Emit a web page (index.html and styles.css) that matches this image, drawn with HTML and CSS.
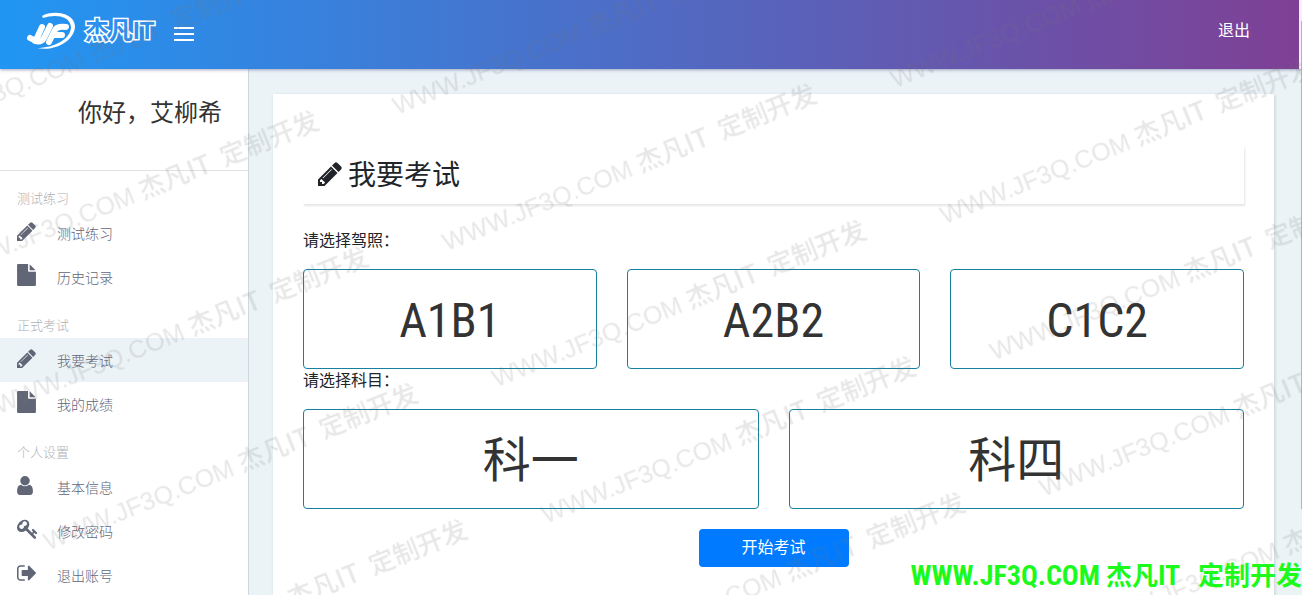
FILE: index.html
```html
<!DOCTYPE html>
<html lang="zh-CN">
<head>
<meta charset="utf-8">
<title>我要考试</title>
<link rel="stylesheet" href="styles.css">
</head>
<body>
<svg class="sprite" aria-hidden="true">
  <symbol id="pencil" viewBox="0 0 1536 1536"><path d="M363 1408l91-91-235-235-91 91v107h128v128h107zM886 480q0-22-22-22-10 0-17 7l-542 542q-7 7-7 17 0 22 22 22 10 0 17-7l542-542q7-7 7-17zM832 288l416 416-832 832H0v-416zM1515 384q0 53-37 90l-166 166-416-416 166-165q36-38 90-38 53 0 91 38l235 234q37 39 37 91z"/></symbol>
  <symbol id="file" viewBox="0 0 1536 1792"><path d="M1024 512V40q22 14 36 28l408 408q14 14 28 36h-472zM896 544q0 40 28 68t68 28h544v1056q0 40-28 68t-68 28H96q-40 0-68-28t-28-68V96q0-40 28-68T96 0h800v544z"/></symbol>
  <symbol id="user" viewBox="0 0 1280 1536"><path d="M1280 1271q0 109-62.500 187t-150.500 78H213q-88 0-150.500-78T0 1271q0-85 8.500-160.500t31.500-152 58.500-131 94-89T327 704q131 128 313 128t313-128q76 0 134.500 34.500t94 89 58.500 131 31.500 152 8.500 160.500zM1024 384q0 159-112.500 271.500T640 768 368.500 655.500 256 384t112.500-271.500T640 0t271.500 112.500T1024 384z"/></symbol>
  <symbol id="key" viewBox="0 128 1664 1664"><path d="M832 512q0-80-56-136t-136-56-136 56-56 136q0 42 19 83-41-19-83-19-80 0-136 56t-56 136 56 136 136 56 136-56 56-136q0-42-19-83 41 19 83 19 80 0 136-56t56-136zM1683 1280q0 17-49 66t-66 49q-9 0-28.500-16t-36.500-33-38.500-40-24.500-26l-96 96 220 220q28 28 28 68 0 42-39 81t-81 39q-40 0-68-28L733 1085q-176 131-365 131-163 0-265.500-102.500T0 848q0-160 95-313t248-248 313-95q163 0 265.500 102.500T1024 560q0 189-131 365l355 355 96-96q-3-3-26-24.500t-40-38.500-33-36.500-16-28.500q0-17 49-66t66-49q13 0 23 10 6 6 46 44.500t82 79.500 86.500 86 73 78 28.500 41z"/></symbol>
  <symbol id="exit" viewBox="0 0 1568 1280"><path d="M640 1184q0 4 1 20t.5 26.500-3 23.500-10 19.500T608 1280H288q-119 0-203.500-84.500T0 992V288Q0 169 84.500 84.500T288 0h320q13 0 22.500 9.500T640 32q0 4 1 20t.5 26.500-3 23.500-10 19.500T608 128H288q-66 0-113 47t-47 113v704q0 66 47 113t113 47h312q7 0 11.500 1t11.500 3 8 7 7 9 2 12zM1568 640q0 26-19 45l-544 544q-19 19-45 19t-45-19-19-45V896H448q-26 0-45-19t-19-45V448q0-26 19-45t45-19h448V96q0-26 19-45t45-19 45 19l544 544q19 19 19 45z"/></symbol>
</svg>

<header class="topbar">
  <a class="brand" href="#" aria-label="杰凡IT">
    <svg class="brand-mark" viewBox="0 0 50 42" aria-hidden="true">
      <path d="M15 6C25 0 47 2 48 16C48 31 27 42 10 38C27 38 44 29 44 17C43 5 27 4 16 8Z"/>
      <path class="letter" d="M15 17L10 28Q8 31 3 28"/>
      <path class="letter" d="M23 16L17 28Q14 33 8 31"/>
      <path class="letter" d="M22 32L28 20Q30 16 39 17M27 25H35"/>
    </svg>
    <span class="brand-name">杰凡IT</span>
  </a>
  <button class="menu" type="button" aria-label="菜单"><span></span><span></span><span></span></button>
  <a class="logout" href="#">退出</a>
</header>

<div class="layout">
  <aside class="sidebar">
    <div class="greeting">你好，艾柳希</div>
    <nav>
      <h2>测试练习</h2>
      <a href="#"><svg class="i-pencil"><use href="#pencil"/></svg>测试练习</a>
      <a href="#"><svg class="i-file"><use href="#file"/></svg>历史记录</a>
      <h2>正式考试</h2>
      <a class="active" href="#"><svg class="i-pencil"><use href="#pencil"/></svg>我要考试</a>
      <a href="#"><svg class="i-file"><use href="#file"/></svg>我的成绩</a>
      <h2>个人设置</h2>
      <a href="#"><svg class="i-user"><use href="#user"/></svg>基本信息</a>
      <a href="#"><svg class="i-key"><use href="#key"/></svg>修改密码</a>
      <a href="#"><svg class="i-exit"><use href="#exit"/></svg>退出账号</a>
    </nav>
  </aside>
  <main class="content">
    <section class="panel">
      <h1><svg><use href="#pencil"/></svg>我要考试</h1>
      <p id="license">请选择驾照：</p>
      <div class="choices" role="group" aria-labelledby="license">
        <button type="button">A1B1</button>
        <button type="button">A2B2</button>
        <button type="button">C1C2</button>
      </div>
      <p id="subject">请选择科目：</p>
      <div class="choices" role="group" aria-labelledby="subject">
        <button type="button">科一</button>
        <button type="button">科四</button>
      </div>
      <button class="start" type="button">开始考试</button>
    </section>
  </main>
</div>

<div class="scroll-thumb"></div>
<svg class="watermark" aria-hidden="true">
  <defs>
    <pattern id="wm" width="477" height="145" patternUnits="userSpaceOnUse" patternTransform="translate(397 115) rotate(-20) translate(0 -110)">
      <text x="0" y="110" transform="rotate(-2 0 110)" xml:space="preserve"><tspan class="latin">WWW.JF3Q.COM </tspan>杰凡IT  定制开发</text>
    </pattern>
  </defs>
  <rect width="100%" height="100%" fill="url(#wm)"/>
</svg>
<div class="credit"><span>WWW.JF3Q.COM</span> 杰凡<span>IT</span>&nbsp;&nbsp; 定制开发</div>
</body>
</html>
```
FILE: styles.css
```css
* { box-sizing: border-box; }
body {
  margin: 0;
  min-height: 100vh;
  display: flex;
  flex-direction: column;
  overflow: hidden;
  background: #ebf3f7;
  color: #212529;
  font: 16px/24px "Liberation Sans", "Noto Sans CJK SC", sans-serif;
}
a { color: inherit; text-decoration: none; }
button { font: inherit; cursor: pointer; }
svg { fill: currentColor; }
.sprite { display: none; }

.topbar {
  position: relative;
  z-index: 1;
  display: flex;
  align-items: center;
  height: 69px;
  padding: 0 49px 8px 27px;
  border-right: 3px solid #f6effb;
  background: linear-gradient(to right, #2196f3, #7e4095);
  box-shadow: 0 1px 3px rgba(60, 60, 120, .45);
  color: #fff;
}
.brand { display: flex; align-items: center; gap: 8px; }
.brand-mark { width: 50px; height: 42px; }
.letter { fill: none; stroke: #fff; stroke-width: 6; stroke-linecap: round; }
.brand-name {
  font-size: 24px;
  font-weight: 700;
  color: #2d90ee;
  -webkit-text-stroke: 3px #fff;
  paint-order: stroke;
}
.menu {
  display: grid;
  gap: 4px;
  margin: 6px 0 0 20px;
  padding: 0;
  border: 0;
  background: none;
}
.menu span { width: 20px; height: 2px; background: #fff; }
.logout { margin-left: auto; }

.layout { flex: 1; display: flex; }
.sidebar {
  width: 249px;
  flex: none;
  background: #fff;
  border-right: 1px solid #ccd9de;
}
.greeting {
  height: 102px;
  padding: 26px 26px 0 0;
  border-bottom: 1px solid #dee2e6;
  text-align: right;
  font-size: 24px;
  line-height: 36px;
  color: #333;
}
nav { padding-top: 1px; }
nav h2 {
  margin: 0;
  height: 39px;
  padding: 17px 17px 0;
  font-size: 13px;
  line-height: 20px;
  font-weight: 300;
  color: #b0b0b6;
}
nav a {
  display: grid;
  grid-template-columns: 40px 1fr;
  align-items: center;
  height: 44px;
  padding: 2px 17px 0;
  font-size: 14px;
  font-weight: 300;
  color: #62667a;
}
nav .active { background: #ebf3f7; }
nav svg { margin-bottom: 6px; fill: #616677; }
.i-pencil { width: 19px; height: 19px; }
.i-file { width: 19px; height: 22px; }
.i-user { width: 16px; height: 19px; }
.i-key { width: 20px; height: 20px; }
.i-exit { width: 19px; height: 16px; }

.content { flex: 1; padding: 25px 28px 0 24px; }
.panel {
  height: 100%;
  padding: 52px 30px 28px;
  background: #fff;
  box-shadow: 1px 1px 3px rgba(0, 0, 0, .15);
}
h1 {
  display: flex;
  align-items: center;
  gap: 6px;
  margin: 0 0 25px;
  height: 58px;
  padding: 2px 15px 0;
  font-size: 28px;
  font-weight: 400;
  box-shadow: 1px 2px 2px rgba(0, 0, 0, .1);
}
h1 svg { width: 24px; height: 24px; margin-bottom: 4px; }
.panel p { margin: 0; padding-bottom: 16px; }
.choices {
  display: grid;
  grid-auto-flow: column;
  grid-auto-columns: 1fr;
  gap: 30px;
}
.choices button {
  height: 100px;
  padding: 4px 6px 0;
  border: 1px solid #17809f;
  border-radius: 4px;
  background: #fff;
  color: #333;
  font: 48px/72px "Roboto Condensed", "Liberation Sans Narrow", "Noto Sans CJK SC", sans-serif;
}
.start {
  display: block;
  width: 150px;
  height: 38px;
  margin: 20px auto 0;
  border: 0;
  border-radius: 4px;
  background: #007bff;
  color: #fff;
}

.scroll-thumb {
  position: absolute;
  top: 21px;
  right: 0;
  z-index: 2;
  width: 1px;
  height: 82%;
  background: #b4b4b8;
}
.watermark {
  position: absolute;
  inset: 0;
  z-index: 2;
  width: 100%;
  height: 100%;
  pointer-events: none;
}
.watermark text {
  font: 500 26px "Noto Sans CJK SC", sans-serif;
  fill: #707070;
  fill-opacity: .17;
}
.watermark .latin { font: 25px "Liberation Sans", sans-serif; }
.credit {
  position: absolute;
  right: 0;
  bottom: 0;
  z-index: 3;
  font: 700 26px/38px "Noto Sans CJK SC", sans-serif;
  color: #1cfa1c;
}
.credit span {
  font-family: "Roboto Condensed", "Liberation Sans Narrow", sans-serif;
  font-size: 28px;
}
```
